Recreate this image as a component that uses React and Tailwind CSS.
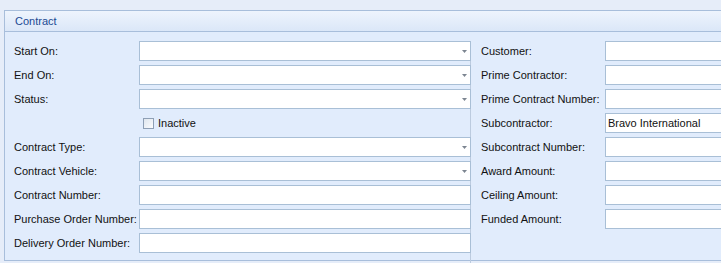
import { useState } from "react";

const leftRows = [
    { label: "Start On:", combo: true },
    { label: "End On:", combo: true },
    { label: "Status:", combo: true },
    { label: "", checkbox: "Inactive" },
    { label: "Contract Type:", combo: true },
    { label: "Contract Vehicle:", combo: true },
    { label: "Contract Number:" },
    { label: "Purchase Order Number:" },
    { label: "Delivery Order Number:" },
];

const rightRows = [
    { label: "Customer:" },
    { label: "Prime Contractor:" },
    { label: "Prime Contract Number:" },
    { label: "Subcontractor:", value: "Bravo International" },
    { label: "Subcontract Number:" },
    { label: "Award Amount:" },
    { label: "Ceiling Amount:" },
    { label: "Funded Amount:" },
];

function Field({ row, labelWidth, inputWidth }) {
    const [checked, setChecked] = useState(false);

    if (row.checkbox) {
        return (
            <div className="flex items-center h-[20px]">
                <div className={`shrink-0 ${labelWidth}`} />
                <label className="flex items-center gap-[4px] pl-[4px] cursor-pointer">
                    <span
                        onClick={() => setChecked(!checked)}
                        className="w-[11px] h-[11px] border border-[#8e9fb5] bg-gradient-to-br from-[#dfe6ee] to-[#fbfcfe] flex items-center justify-center text-[9px] leading-none"
                    >
                        {checked ? "✓" : ""}
                    </span>
                    <span>{row.checkbox}</span>
                </label>
            </div>
        );
    }

    return (
        <div className="flex items-center h-[20px]">
            <div className={`shrink-0 whitespace-nowrap ${labelWidth}`}>{row.label}</div>
            <div
                className={`relative h-[20px] shrink-0 bg-white border border-[#a9bfd6] flex items-center ${inputWidth}`}
            >
                <span className="pl-[2px]">{row.value || ""}</span>
                {row.combo && (
                    <svg
                        className="absolute right-[3px] top-[8px]"
                        width="5"
                        height="3"
                        viewBox="0 0 5 3"
                    >
                        <path d="M0 0 H5 L2.5 3 Z" fill="#7c8591" />
                    </svg>
                )}
            </div>
        </div>
    );
}

export default function App() {
    return (
        <div
            className="w-[721px] h-[263px] overflow-hidden bg-[#e6edf9] pt-[10px] pl-[4px] text-[11px] text-[#111]"
            style={{ fontFamily: "Tahoma, 'Liberation Sans', Arial, sans-serif" }}
        >
            <div className="w-[740px] h-[251px] border border-[#a8bedb] bg-[#e1ecfc] flex flex-col">
                {/* HEADER */}
                <div className="h-[21px] shrink-0 border-b border-[#a8bedb] bg-gradient-to-b from-[#eef4fd] to-[#dbe7f8] flex items-center pl-[10px] text-[#1c4a93]">
                    Contract
                </div>

                {/* BODY */}
                <div className="flex pt-[9px]">
                    {/* LEFT COLUMN */}
                    <div className="flex flex-col gap-[4px] pl-[9px] w-[465px]">
                        {leftRows.map((row, i) => (
                            <Field key={i} row={row} labelWidth="w-[125px]" inputWidth="w-[332px]" />
                        ))}
                    </div>

                    {/* RIGHT COLUMN */}
                    <div className="flex flex-col gap-[4px] pl-[10px] border-l border-[#bccbdf] h-[229px]">
                        {rightRows.map((row, i) => (
                            <Field key={i} row={row} labelWidth="w-[124px]" inputWidth="w-[160px]" />
                        ))}
                    </div>
                </div>
            </div>
        </div>
    );
}
